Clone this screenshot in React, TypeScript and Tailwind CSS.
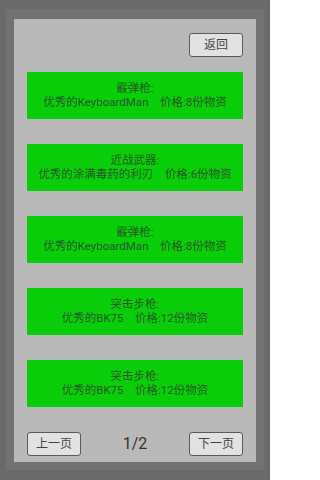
const items = [
  { type: "霰弹枪:", name: "优秀的KeyboardMan", price: "价格:8份物资" },
  { type: "近战武器:", name: "优秀的涂满毒药的利刃", price: "价格:6份物资" },
  { type: "霰弹枪:", name: "优秀的KeyboardMan", price: "价格:8份物资" },
  { type: "突击步枪:", name: "优秀的BK75", price: "价格:12份物资" },
  { type: "突击步枪:", name: "优秀的BK75", price: "价格:12份物资" },
];

function GrayButton({ children }: { children: React.ReactNode }) {
  return (
    <button
      type="button"
      className="flex h-[24px] w-[54px] items-center justify-center rounded-[3px] border border-[#5a5a5a] bg-[#e2e2e2] text-[12px] text-[#444]"
    >
      {children}
    </button>
  );
}

export default function App() {
  return (
    <div
      className="h-[480px] w-[270px] bg-[#6a6a6a] px-[6px] pt-[9px] pb-[10px]"
      style={{ fontFamily: 'Roboto, "Noto Sans CJK SC", sans-serif' }}
    >
      <div className="h-full bg-[#727272] px-[8px] pt-[10px] pb-[8px]">
        <div className="flex h-full flex-col bg-[#b9b9b9] px-[13px] pt-[14px]">
          <div className="flex justify-end">
            <GrayButton>返回</GrayButton>
          </div>
          <div className="mt-[15px] flex flex-col gap-[25px]">
            {items.map((it, i) => (
              <div
                key={i}
                className="flex h-[47px] flex-col items-center justify-center bg-[#0bce0b] text-[11.5px] leading-[13.5px] text-[#245a24]"
              >
                <div>{it.type}</div>
                <div className="whitespace-pre">
                  {it.name}
                  {"　"}
                  {it.price}
                </div>
              </div>
            ))}
          </div>
          <div className="mt-[25px] flex items-center justify-between">
            <GrayButton>上一页</GrayButton>
            <span className="text-[16px] text-[#333]">1/2</span>
            <GrayButton>下一页</GrayButton>
          </div>
        </div>
      </div>
    </div>
  );
}
